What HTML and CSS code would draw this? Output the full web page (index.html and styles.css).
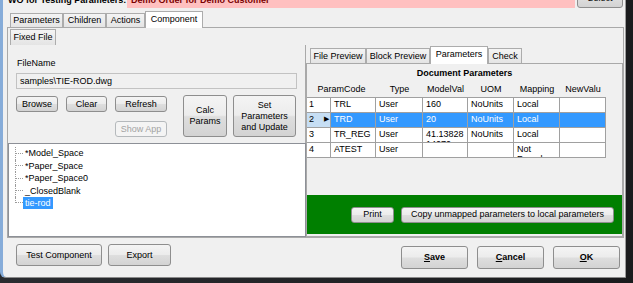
FILE: index.html
```html
<!DOCTYPE html>
<html>
<head>
<meta charset="utf-8">
<title>Component</title>
<link rel="stylesheet" href="styles.css">
</head>
<body>
<div class="window">
  <div class="topbar">
    <span class="wo">WO for Testing Parameters:</span>
    <div class="pink"><span>Demo Order for Demo Customer</span></div>
    <button class="btn select">Select</button>
  </div>

  <div class="tabstrip main-tabs">
    <span class="tab t-params">Parameters</span>
    <span class="tab t-children">Children</span>
    <span class="tab t-actions">Actions</span>
    <span class="tab active t-component">Component</span>
  </div>

  <div class="page">
    <div class="tabstrip sub-tabs">
      <span class="tab t-fixed">Fixed File</span>
    </div>
    <div class="split">
      <div class="left">
        <div class="fileblock">
          <div class="label">FileName</div>
          <div class="textbox">samples\TIE-ROD.dwg</div>
          <div class="btnrow">
            <button class="btn b-browse">Browse</button>
            <button class="btn b-clear">Clear</button>
            <div class="btncol">
              <button class="btn b-refresh">Refresh</button>
              <button class="btn b-show" disabled>Show App</button>
            </div>
            <button class="btn b-calc">Calc<br>Params</button>
            <button class="btn b-set">Set<br>Parameters<br>and Update</button>
          </div>
        </div>
        <div class="tree">
          <ul>
            <li><span class="conn"></span><span class="node">*Model_Space</span></li>
            <li><span class="conn"></span><span class="node">*Paper_Space</span></li>
            <li><span class="conn"></span><span class="node">*Paper_Space0</span></li>
            <li><span class="conn"></span><span class="node">_ClosedBlank</span></li>
            <li><span class="conn"></span><span class="node sel">tie-rod</span></li>
          </ul>
        </div>
      </div>

      <div class="right">
        <div class="tabstrip right-tabs">
          <span class="tab t-filepreview">File Preview</span>
          <span class="tab t-blockpreview">Block Preview</span>
          <span class="tab active t-rparams">Parameters</span>
          <span class="tab t-check">Check</span>
        </div>
        <div class="rpanel">
          <div class="caption">Document Parameters</div>
          <div class="ghead">
            <span class="h w-code">ParamCode</span>
            <span class="h w-type">Type</span>
            <span class="h w-model">ModelVal</span>
            <span class="h w-uom">UOM</span>
            <span class="h w-map">Mapping</span>
            <span class="h w-new">NewValu</span>
          </div>
          <div class="gbody">
            <div class="row">
              <span class="c rh">1</span>
              <span class="c w-pc">TRL</span>
              <span class="c w-type">User</span>
              <span class="c w-model">160</span>
              <span class="c w-uom">NoUnits</span>
              <span class="c w-map">Local</span>
              <span class="c w-new"></span>
            </div>
            <div class="row selected">
              <span class="c rh"><span>2</span><span class="arrow">&#9654;</span></span>
              <span class="c w-pc">TRD</span>
              <span class="c w-type">User</span>
              <span class="c w-model">20</span>
              <span class="c w-uom">NoUnits</span>
              <span class="c w-map">Local</span>
              <span class="c w-new"></span>
            </div>
            <div class="row">
              <span class="c rh">3</span>
              <span class="c w-pc">TR_REG</span>
              <span class="c w-type">User</span>
              <span class="c w-model brk">41.1382814070</span>
              <span class="c w-uom">NoUnits</span>
              <span class="c w-map">Local</span>
              <span class="c w-new"></span>
            </div>
            <div class="row">
              <span class="c rh">4</span>
              <span class="c w-pc">ATEST</span>
              <span class="c w-type">User</span>
              <span class="c w-model"></span>
              <span class="c w-uom"></span>
              <span class="c w-map">Not Found</span>
              <span class="c w-new"></span>
            </div>
          </div>
          <div class="filler"></div>
          <div class="greenbar">
            <button class="btn b-print">Print</button>
            <button class="btn b-copy">Copy unmapped parameters to local parameters</button>
          </div>
        </div>
      </div>
    </div>
  </div>

  <div class="bottombar">
    <div class="bgroup left-group">
      <button class="btn b-test">Test Component</button>
      <button class="btn b-export">Export</button>
    </div>
    <div class="bgroup right-group">
      <button class="btn b-dlg strong"><u>S</u>ave</button>
      <button class="btn b-dlg strong"><u>C</u>ancel</button>
      <button class="btn b-dlg strong"><u>O</u>K</button>
    </div>
  </div>
</div>
</body>
</html>
```

FILE: styles.css
```css
* { box-sizing: border-box; }

html, body { margin: 0; padding: 0; }

body {
  width: 633px;
  height: 283px;
  overflow: hidden;
  background: linear-gradient(90deg, #2a2c30, #1a1b1d);
  font-family: "Liberation Sans", Arial, sans-serif;
  font-size: 9px;
  color: #000;
}

.window {
  width: 626px;
  height: 278px;
  background: #f0f0f0;
  border-left: 3px solid #86acd9;
  border-right: 1px solid #9c9c9c;
  border-bottom: 1px solid #8a8a8a;
  border-bottom-left-radius: 6px;
  display: flex;
  flex-direction: column;
}

/* ---------- top bar ---------- */
.topbar {
  height: 9px;
  flex: none;
  display: flex;
  align-items: flex-start;
  padding-left: 5px;
}
.wo {
  width: 119px;
  font-weight: bold;
  line-height: 12px;
  margin-top: -6px;
  white-space: nowrap;
}
.pink {
  flex: 1;
  height: 8px;
  background: #ffc0c0;
  overflow: hidden;
  padding-left: 4px;
}
.pink span {
  display: block;
  font-weight: bold;
  color: #7a0000;
  line-height: 12px;
  margin-top: -6px;
  white-space: nowrap;
}
.select {
  width: 46px;
  height: 20px;
  margin: -12px 2px 0 2px;
  font-weight: bold;
}

/* ---------- buttons ---------- */
.btn {
  font: inherit;
  color: #000;
  padding: 0;
  border: 1px solid #8e8e8e;
  border-radius: 3px;
  background: linear-gradient(#f4f4f4 0%, #ececec 48%, #dedede 52%, #d3d3d3 100%);
  text-align: center;
  line-height: 11px;
  cursor: default;
}
.btn:disabled {
  color: #a3a3a3;
  border-color: #b5b9bc;
  background: #f4f4f4;
}
.strong { font-weight: bold; }

/* ---------- tabs ---------- */
.tabstrip {
  flex: none;
  display: flex;
  align-items: flex-end;
}
.tab {
  height: 14px;
  line-height: 13px;
  text-align: center;
  border: 1px solid #acacac;
  border-bottom: none;
  background: linear-gradient(#f4f4f4, #e4e4e4);
  white-space: nowrap;
}
.tab.active {
  position: relative;
  z-index: 1;
  height: 17px;
  margin-bottom: -1px;
  line-height: 14px;
  background: #ffffff;
}

.main-tabs { height: 18px; padding-left: 7px; }
.t-params { width: 53px; }
.t-children { width: 43px; margin-left: 0; }
.t-actions { width: 39px; margin-left: 0; }
.t-component { width: 58px; height: 17px; }

.page {
  margin-left: 4px;
  width: 617px;
  height: 211px;
  flex: none;
  border: 1px solid #a9a9a9;
  display: flex;
  flex-direction: column;
}
.sub-tabs { margin-top: 1px; height: 16px; padding-left: 2px; }
.t-fixed { width: 46px; height: 16px; line-height: 15px; }

.split {
  flex: 1;
  display: flex;
}

/* ---------- left column ---------- */
.left {
  width: 298px;
  display: flex;
  flex-direction: column;
}
.fileblock {
  height: 98px;
  border-right: 1px solid #a9a9a9;
  padding: 13px 0 0 8px;
}
.label {
  line-height: 11px;
  padding-left: 1px;
}
.textbox {
  margin-top: 4px;
  width: 281px;
  height: 16px;
  line-height: 14px;
  padding-left: 3px;
  border: 1px solid #c2c2c2;
  background: #f0f0f0;
}
.btnrow {
  margin-top: 7px;
  display: flex;
  align-items: flex-start;
}
.btncol {
  display: flex;
  flex-direction: column;
  margin-left: 8px;
}
.b-browse { width: 42px; height: 16px; }
.b-clear { width: 41px; height: 16px; margin-left: 8px; }
.b-refresh { width: 52px; height: 16px; }
.b-show { width: 52px; height: 16px; margin-top: 9px; }
.b-calc { width: 44px; height: 42px; margin: -1px 0 0 16px; }
.b-set { width: 63px; height: 42px; margin: -1px 0 0 6px; }

.tree {
  flex: 1;
  border: 1px solid #8d9097;
  background: #ffffff;
}
.tree ul {
  list-style: none;
  margin: 0;
  padding: 3px 0 0 6px;
}
.tree li {
  display: flex;
  align-items: center;
  height: 12.5px;
}
.conn {
  width: 8px;
  align-self: stretch;
  border-left: 1px dotted #9a9a9a;
  display: flex;
  align-items: center;
}
.conn::after {
  content: "";
  width: 7px;
  border-top: 1px dotted #9a9a9a;
}
.tree li:last-child .conn {
  align-self: flex-start;
  height: 6px;
  align-items: flex-end;
}
.node {
  padding: 0 2px;
  line-height: 12px;
  white-space: nowrap;
}
.node.sel {
  background: #3399ff;
  color: #ffffff;
}

/* ---------- right column ---------- */
.right {
  flex: 1;
  display: flex;
  flex-direction: column;
}
.right-tabs { height: 18px; padding-left: 4px; }
.right-tabs .tab { height: 15px; line-height: 14px; }
.right-tabs .tab.active { height: 18px; line-height: 15px; }
.t-filepreview { width: 56px; }
.t-blockpreview { width: 64px; }
.t-rparams { width: 58px; }
.t-check { width: 34px; }

.rpanel {
  flex: 1;
  border: 1px solid #a9a9a9;
  background: #f0f0f0;
  display: flex;
  flex-direction: column;
}
.caption {
  height: 18px;
  line-height: 18px;
  text-align: center;
  font-weight: bold;
}
.ghead {
  height: 15px;
  display: flex;
  line-height: 15px;
}
.h { text-align: center; white-space: nowrap; }
.ghead .w-code { width: 69px; }

.w-pc { width: 45px; }
.w-type { width: 47px; }
.w-model { width: 45px; }
.w-uom { width: 46px; }
.w-map { width: 46px; }
.w-new { width: 46px; }

.gbody {
  width: 299px;
  border-top: 1px solid #a0a0a0;
}
.row {
  display: flex;
  height: 15px;
  border-bottom: 1px solid #a0a0a0;
}
.c {
  border-right: 1px solid #a0a0a0;
  padding: 1px 1px 0 3px;
  line-height: 10px;
  overflow: hidden;
  background: #ffffff;
}
.brk { word-break: break-all; }
.rh {
  width: 24px;
  padding-left: 2px;
  display: flex;
  justify-content: space-between;
}
.arrow {
  font-size: 7px;
  line-height: 10px;
  padding-right: 0;
}
.row.selected .c {
  background: #3399ff;
  color: #ffffff;
}
.row.selected .rh {
  background: #c6def4;
  color: #000;
}

.filler { flex: 1; }

.greenbar {
  height: 39px;
  margin-bottom: 2px;
  background: #007f00;
  display: flex;
  align-items: center;
  justify-content: flex-end;
  padding-right: 8px;
}
.b-print { width: 43px; height: 16px; }
.b-copy { width: 213px; height: 16px; margin-left: 7px; }

/* ---------- bottom bar ---------- */
.bottombar {
  flex: 1;
  display: flex;
  justify-content: space-between;
  align-items: flex-start;
  padding: 0 5px 0 13px;
}
.bgroup { display: flex; }
.left-group { margin-top: 6px; }
.right-group { margin-top: 8px; }
.b-test { width: 86px; height: 22px; }
.b-export { width: 63px; height: 22px; margin-left: 6px; }
.b-dlg { width: 67px; height: 23px; margin-left: 9px; }
.b-dlg:first-child { margin-left: 0; }
```
